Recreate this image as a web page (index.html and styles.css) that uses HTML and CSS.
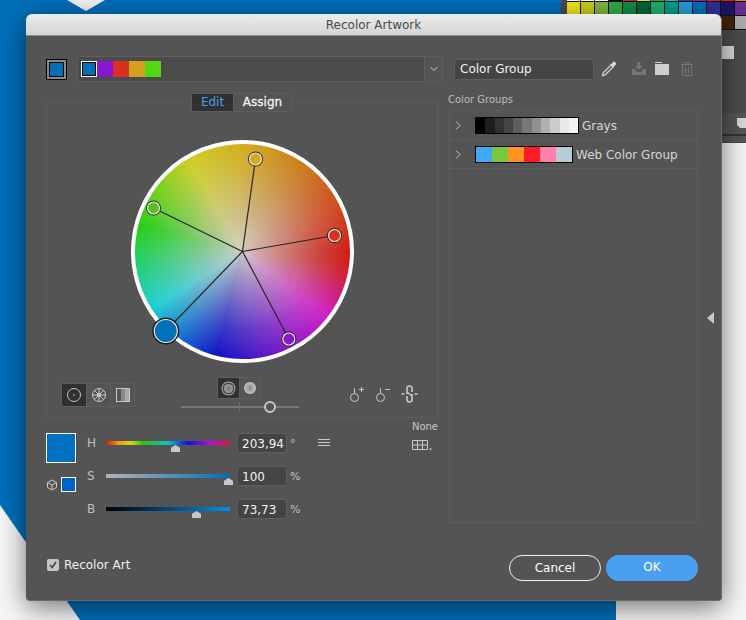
FILE: index.html
```html
<!DOCTYPE html>
<html lang="en">
<head>
    <meta charset="UTF-8">
    <title>Recolor Artwork</title>
    <link rel="stylesheet" href="styles.css">
</head>
<body>
    <!-- artboard behind the dialog -->
    <svg class="backdrop" width="746" height="620" viewBox="0 0 746 620">
        <rect width="746" height="620" fill="#f6f6f6"/>
        <polygon points="0,0 616,0 616,620 80,620 0,505" fill="#0070ba"/>
        <polygon points="67,0 105,0 86,11" fill="#f4f4f4"/>
        <rect x="561" width="185" height="143" fill="#4c4c4c"/>
        <rect x="722" y="113" width="24" height="29" fill="#555"/>
        <rect x="722" y="134" width="24" height="2" fill="#333"/>
        <rect x="722" y="46" width="12" height="13" fill="#dcdcdc"/>
        <path d="M737 118h9v10h-6l-3-3z" fill="#d8d8d8"/>
        <rect x="567" width="180" height="30" fill="#111"/>
        <g>
            <rect x="567" width="13" height="1" fill="#fff"/><rect x="581" width="13" height="1" fill="#fff"/>
            <rect x="595" width="13" height="1" fill="#fff"/><rect x="609" width="13" height="1" fill="#111"/>
            <rect x="623" width="13" height="1" fill="#ed1c24"/><rect x="637" width="13" height="1" fill="#f5e61c"/>
            <rect x="651" width="13" height="1" fill="#22b14c"/><rect x="665" width="13" height="1" fill="#1cc0c0"/>
            <rect x="679" width="13" height="1" fill="#2040d0"/><rect x="693" width="13" height="1" fill="#c010c0"/>
            <rect x="707" width="13" height="1" fill="#ed1c24"/><rect x="721" width="13" height="1" fill="#ed1c24"/>
            <rect x="735" width="11" height="1" fill="#f08020"/>
        </g>
        <g>
            <rect x="567" y="2" width="13" height="13" fill="#f5e61c"/><rect x="581" y="2" width="13" height="13" fill="#d0d018"/>
            <rect x="595" y="2" width="13" height="13" fill="#80b840"/><rect x="609" y="2" width="13" height="13" fill="#34aa48"/>
            <rect x="623" y="2" width="13" height="13" fill="#109048"/><rect x="637" y="2" width="13" height="13" fill="#006838"/>
            <rect x="651" y="2" width="13" height="13" fill="#20b070"/><rect x="665" y="2" width="13" height="13" fill="#00a090"/>
            <rect x="679" y="2" width="13" height="13" fill="#28a0d8"/><rect x="693" y="2" width="13" height="13" fill="#0070b8"/>
            <rect x="707" y="2" width="13" height="13" fill="#2e3192"/><rect x="721" y="2" width="13" height="13" fill="#1b1464"/>
            <rect x="735" y="2" width="11" height="13" fill="#662d91"/>
        </g>
        <rect x="722" y="16" width="12" height="13" fill="#42210b"/>
        <rect x="735" y="16" width="11" height="13" fill="#aaa"/>
    </svg>

    <div class="dialog">
        <div class="titlebar">Recolor Artwork</div>

        <div class="dialog-body">
            <div class="top-row">
                <div class="active-swatch"><span></span></div>
                <div class="harmony-strip">
                    <div class="strip-first"></div>
                    <div class="strip-rest"></div>
                    <div class="strip-arrow">
                        <svg width="10" height="6" viewBox="0 0 10 6"><path d="M1.500 1 5 4.500 8.500 1" class="ln"/></svg>
                    </div>
                </div>
                <div class="name-field">Color Group</div>
                <svg class="ico-dropper" width="18" height="18" viewBox="0 0 18 18">
                    <path d="M10.500 5.500 3.200 12.800 2.500 15.500l2.700-.7L12.500 7.500" fill="none" stroke="#d0d0d0" stroke-width="1.300"/>
                    <path d="M9.500 4.500l1.800-.3L13 2c1.300-1.300 4 1.200 2.800 2.700l-2 1.900-.3 1.900z" fill="#d8d8d8"/>
                </svg>
                <svg class="ico-import" width="16" height="16" viewBox="0 0 16 16">
                    <path d="M6.500 1h3v4H12L8 9 4 5h2.500z" fill="#757575"/>
                    <path d="M1 8h3l2 3h4l2-3h3v6H1z" fill="#757575"/>
                </svg>
                <svg class="ico-folder" width="16" height="16" viewBox="0 0 16 16">
                    <path d="M1 1h7v1H1z" fill="#cfcfcf"/>
                    <path d="M1 3h14v11H1z" fill="#cfcfcf"/>
                </svg>
                <svg class="ico-trash" width="14" height="16" viewBox="0 0 14 16">
                    <path d="M1 3.500h12M5 3.500v-2h4v2M2.500 3.500v11h9v-11M5.500 6v6.500M8.500 6v6.500" class="ln dim"/>
                </svg>
            </div>

            <div class="main">
                <div class="left-col">
                    <div class="panel">
                        <div class="tabs">
                            <div class="tab tab-active">Edit</div>
                            <div class="tab tab-assign">Assign</div>
                        </div>

                        <div class="wheel">
                            <svg class="wheel-marks" width="223" height="223" viewBox="0 0 223 223">
                                <g stroke="#262626" stroke-width="1.200">
                                    <line x1="111.500" y1="111.500" x2="124.500" y2="19"/>
                                    <line x1="111.500" y1="111.500" x2="22.500" y2="68"/>
                                    <line x1="111.500" y1="111.500" x2="203.500" y2="95.500"/>
                                    <line x1="111.500" y1="111.500" x2="157.800" y2="199"/>
                                    <line x1="111.500" y1="111.500" x2="34.800" y2="191"/>
                                </g>
                                <g fill="#262626">
                                    <circle cx="124.500" cy="19" r="7.500"/>
                                    <circle cx="22.500" cy="68" r="7.500"/>
                                    <circle cx="203.500" cy="95.500" r="7.500"/>
                                    <circle cx="157.800" cy="199" r="7.500"/>
                                </g>
                                <g stroke="#e8e8e8" stroke-width="1.200">
                                    <circle cx="124.500" cy="19" r="6" fill="#d8a81c"/>
                                    <circle cx="22.500" cy="68" r="6" fill="#58c020"/>
                                    <circle cx="203.500" cy="95.500" r="6" fill="#d83020"/>
                                    <circle cx="157.800" cy="199" r="6" fill="#8818c8"/>
                                </g>
                                <circle cx="34.800" cy="191" r="13.500" fill="#1c1c1c"/>
                                <circle cx="34.800" cy="191" r="11.500" fill="#0070b8" stroke="#e8e8e8" stroke-width="1.200"/>
                            </svg>
                        </div>

                        <div class="tool-row">
                            <div class="btn-group">
                                <div class="tool-btn tool-btn-active">
                                    <svg width="16" height="16" viewBox="0 0 16 16"><circle cx="8" cy="8" r="6.500" class="ln"/><circle cx="8" cy="8" r=".8" fill="#ccc"/></svg>
                                </div>
                                <div class="tool-btn">
                                    <svg width="16" height="16" viewBox="0 0 16 16">
                                        <circle cx="8" cy="8" r="6.500" class="ln"/>
                                        <circle cx="8" cy="8" r="2" fill="#ccc"/>
                                        <path d="M8 1.500v13M1.500 8h13M3.400 3.400l9.200 9.200M12.600 3.400l-9.200 9.200" class="ln"/>
                                    </svg>
                                </div>
                                <div class="tool-btn">
                                    <svg width="16" height="16" viewBox="0 0 16 16">
                                        <rect x="6" y="2" width="4" height="12" fill="#888"/>
                                        <rect x="10" y="2" width="4" height="12" fill="#a8a8a8"/>
                                        <rect x="1.500" y="1.500" width="13" height="13" class="ln"/>
                                    </svg>
                                </div>
                            </div>

                            <div class="shade-tool">
                                <div class="btn-group shade-group">
                                    <div class="tool-btn tool-btn-active">
                                        <div class="shade-dot shade-ring"></div>
                                    </div>
                                    <div class="tool-btn">
                                        <div class="shade-dot shade-soft"></div>
                                    </div>
                                </div>
                                <div class="shade-slider"><span class="shade-tick"></span><span class="shade-knob"></span></div>
                            </div>

                            <div class="link-tools">
                                <svg width="16" height="18" viewBox="0 0 16 18">
                                    <circle cx="5.500" cy="12.500" r="4" class="ln"/><path d="M5.500 8.500V3M10 4.500h5M12.500 2v5" class="ln"/>
                                </svg>
                                <svg width="16" height="18" viewBox="0 0 16 18">
                                    <circle cx="5.500" cy="12.500" r="4" class="ln"/><path d="M5.500 8.500V3M10 4.500h5" class="ln"/>
                                </svg>
                                <svg width="17" height="18" viewBox="0 0 17 18">
                                    <path d="M6 9V3.500a2.500 2.500 0 0 1 5 0V7M11 9v5.500a2.500 2.500 0 0 1-5 0V11M6 7l5 4M.5 9h3M13.500 9h3" class="ln ln-chain"/>
                                </svg>
                            </div>
                        </div>
                    </div>

                    <div class="hsb">
                        <div class="hsb-swatches">
                            <div class="fill-swatch"></div>
                            <div class="web-safe">
                                <svg width="12" height="12" viewBox="0 0 12 12"><path d="M6 1l4.500 2.500v5L6 11 1.500 8.500v-5zM1.500 3.500 6 6l4.500-2.500M6 6v5" class="ln"/></svg>
                                <div class="mini-swatch"></div>
                            </div>
                        </div>
                        <div class="hsb-rows">
                            <div class="hsb-row">
                                <div class="hsb-label">H</div>
                                <div class="track track-h"><span class="thumb thumb-h"></span></div>
                                <div class="num-field">203,94</div>
                                <div class="unit">°</div>
                                <svg class="ico-menu" width="12" height="8" viewBox="0 0 12 8"><path d="M0 .5h12M0 3.500h12M0 6.500h12" class="ln"/></svg>
                            </div>
                            <div class="hsb-row">
                                <div class="hsb-label">S</div>
                                <div class="track track-s"><span class="thumb thumb-s"></span></div>
                                <div class="num-field">100</div>
                                <div class="unit">%</div>
                            </div>
                            <div class="hsb-row">
                                <div class="hsb-label">B</div>
                                <div class="track track-b"><span class="thumb thumb-b"></span></div>
                                <div class="num-field">73,73</div>
                                <div class="unit">%</div>
                            </div>
                        </div>
                        <div class="none-box">
                            <div class="none-label">None</div>
                            <svg width="20" height="11" viewBox="0 0 20 11">
                                <path d="M.5.500h15v9H.5zM.5 5h15M5.500.500v9M10.500.500v9" class="ln"/>
                                <path d="M17 8.500h3L18.500 10.500z" fill="#ccc"/>
                            </svg>
                        </div>
                    </div>
                </div>

                <div class="right-col">
                    <div class="groups-label">Color Groups</div>
                    <div class="groups-box">
                        <div class="group-row">
                            <svg class="chev" width="6" height="9" viewBox="0 0 6 9"><path d="M1 .5 5 4.500 1 8.500" class="ln"/></svg>
                            <div class="group-swatch group-grays"></div>
                            <div class="group-name">Grays</div>
                        </div>
                        <div class="group-row">
                            <svg class="chev" width="6" height="9" viewBox="0 0 6 9"><path d="M1 .5 5 4.500 1 8.500" class="ln"/></svg>
                            <div class="group-swatch group-web"></div>
                            <div class="group-name">Web Color Group</div>
                        </div>
                    </div>
                </div>
            </div>

            <div class="footer">
                <div class="check-wrap">
                    <div class="checkbox">
                        <svg width="12" height="12" viewBox="0 0 12 12"><path d="M3 6l2.200 2.500L9 3" fill="none" stroke="#444" stroke-width="1.600"/></svg>
                    </div>
                    <div class="check-label">Recolor Art</div>
                </div>
                <div class="footer-btns">
                    <div class="btn btn-cancel">Cancel</div>
                    <div class="btn btn-ok">OK</div>
                </div>
            </div>
        </div>

        <div class="collapse-arrow"></div>
    </div>
</body>
</html>
```

FILE: styles.css
```css
* {
    box-sizing: border-box;
}

body {
    margin: 0;
    width: 746px;
    height: 620px;
    overflow: hidden;
    position: relative;
    font-family: "DejaVu Sans", Verdana, sans-serif;
    font-size: 12px;
    color: #e6e6e6;
}

.backdrop {
    position: absolute;
    top: 0;
    left: 0;
}

.ln {
    fill: none;
    stroke: #c8c8c8;
    stroke-width: 1;
}

.ln-chain {
    stroke-width: 1.600;
}

.dim {
    stroke: #757575;
}

.dialog {
    position: absolute;
    left: 26px;
    top: 14px;
    width: 696px;
    height: 587px;
    background-color: #545454;
    border-radius: 6px 6px 4px 4px;
    border-right: 1px solid #6a6a6a;
    border-bottom: 1px solid #6a6a6a;
    box-shadow: 0 6px 28px rgba(0,0,0,0.55);
}

.titlebar {
    height: 22px;
    line-height: 23px;
    text-align: center;
    color: #4a4a4a;
    background: linear-gradient(#ececec, #d4d4d4);
    border-bottom: 1px solid #8c8c8c;
    border-radius: 6px 6px 0 0;
}

.dialog-body {
    padding: 20px 23px 0 20px;
}

/* top row */
.top-row {
    display: flex;
    align-items: center;
    height: 26px;
}

.active-swatch {
    width: 21px;
    height: 21px;
    border: 1px solid #000;
    background-color: #8a8a8a;
    padding: 2px;
}

.active-swatch span {
    display: block;
    width: 100%;
    height: 100%;
    background-color: #0070b8;
    border: 1px solid #000;
}

.harmony-strip {
    width: 366px;
    height: 26px;
    margin-left: 10px;
    display: flex;
    align-items: center;
    padding-left: 3px;
    background-color: #4b4b4b;
    border: 1px solid #5e5e5e;
    border-radius: 2px;
}

.strip-first {
    width: 16px;
    height: 16px;
    background-color: #0070b8;
    border: 1px solid #fff;
    box-shadow: inset 0 0 0 1px #000;
}

.strip-rest {
    width: 64px;
    height: 16px;
    background: linear-gradient(90deg, #8518d0 25%, #d83020 25%, #d83020 50%, #d4a020 50%, #d4a020 75%, #50d810 75%);
}

.strip-arrow {
    margin-left: auto;
    width: 18px;
    height: 24px;
    display: flex;
    align-items: center;
    justify-content: center;
    background-color: #545454;
    border-left: 1px solid #5e5e5e;
}

.name-field {
    width: 140px;
    height: 21px;
    line-height: 19px;
    margin-left: 11px;
    padding-left: 5px;
    background-color: #444;
    border: 1px solid #5e5e5e;
    border-radius: 3px;
    color: #f0f0f0;
}

.ico-dropper {
    margin-left: 6px;
}

.ico-import {
    margin-left: 13px;
}

.ico-folder {
    margin-left: 7px;
}

.ico-trash {
    margin-left: 10px;
}

.main {
    display: flex;
    gap: 11px;
    margin-top: 11px;
}

.left-col {
    width: 392px;
    padding-top: 9px;
}

/* wheel panel */
.panel {
    position: relative;
    height: 316px;
    padding-top: 37px;
    border: 1px solid #5e5e5e;
    border-radius: 3px;
}

.tabs {
    position: absolute;
    top: -10px;
    left: 144px;
    display: flex;
    height: 19px;
    background-color: #545454;
    border: 1px solid #5e5e5e;
    border-radius: 3px;
    box-shadow: 0 0 0 3px #545454;
}

.tab {
    width: 58px;
    line-height: 17px;
    text-align: center;
    color: #f0f0f0;
    border-left: 1px solid #5e5e5e;
}

.tab-assign {
    -webkit-text-stroke: 0.3px #f0f0f0;
}

.tab-active {
    width: 41px;
    color: #4a9fe8;
    background-color: #303030;
    border-left: none;
}

.wheel {
    position: relative;
    width: 223px;
    height: 223px;
    margin: 0 auto;
    border-radius: 50%;
    border: 4px solid #fff;
    background-origin: border-box;
    background-image:
        radial-gradient(circle closest-side, rgba(212,208,202,0.94) 0, rgba(204,198,198,0.6) 35%, rgba(200,200,200,0.24) 70%, rgba(200,200,200,0) 100%),
        conic-gradient(from 90deg, #d01810 0deg, #d01810 6deg, #d018c8 38deg, #0a0cc8 104deg, #18d0d8 148deg, #20d010 194deg, #d0d020 240deg, #d4ac18 270deg, #cc7a18 305deg, #d04018 338deg, #d01810 360deg);
}

.wheel-marks {
    position: absolute;
    top: -4px;
    left: -4px;
    overflow: visible;
}

.tool-row {
    display: flex;
    margin-top: 14px;
    padding: 0 19px 0 14px;
}

.btn-group {
    display: flex;
    height: 24px;
    margin-top: 6px;
    border: 1px solid #5e5e5e;
    border-radius: 3px;
}

.tool-btn {
    width: 24px;
    display: flex;
    align-items: center;
    justify-content: center;
    border-left: 1px solid #5e5e5e;
}

.tool-btn:first-child {
    border-left: none;
}

.tool-btn-active {
    background-color: #303030;
}

.shade-tool {
    width: 118px;
    margin-left: 46px;
    display: flex;
    flex-direction: column;
    align-items: center;
}

.shade-group {
    margin-top: 0;
    height: 22px;
    margin-right: 2px;
}

.shade-group .tool-btn {
    width: 21px;
}

.shade-dot {
    width: 12px;
    height: 12px;
    border-radius: 50%;
    background: radial-gradient(circle, #777 0, #999 60%, #bbb 100%);
}

.shade-soft {
    background: radial-gradient(circle, #888 0, #bbb 60%, #ddd 100%);
}

.shade-ring {
    width: 9px;
    height: 9px;
    box-shadow: 0 0 0 1.500px #444, 0 0 0 2.500px #aaa;
}

.shade-slider {
    position: relative;
    width: 118px;
    height: 2px;
    margin-top: 7px;
    background-color: #777;
}

.shade-tick {
    position: absolute;
    left: 58px;
    top: -4px;
    width: 1px;
    height: 10px;
    background-color: #6e6e6e;
}

.shade-knob {
    position: absolute;
    left: 83px;
    top: -5px;
    width: 12px;
    height: 12px;
    border: 2px solid #c8c8c8;
    border-radius: 50%;
    background-color: #545454;
}

.link-tools {
    margin-left: auto;
    display: flex;
    gap: 10px;
    height: 18px;
    margin-top: 8px;
}

/* hue, saturation, brightness */
.hsb {
    display: flex;
    margin-top: 15px;
}

.hsb-swatches {
    width: 30px;
}

.fill-swatch {
    width: 30px;
    height: 30px;
    background-color: #0070c0;
    border: 1px solid #fff;
}

.web-safe {
    display: flex;
    align-items: center;
    justify-content: space-between;
    margin-top: 14px;
}

.mini-swatch {
    width: 15px;
    height: 15px;
    background-color: #0062c8;
    border: 1px solid #fff;
}

.hsb-rows {
    margin-left: 11px;
}

.hsb-row {
    display: flex;
    align-items: center;
    height: 20px;
    margin-bottom: 13px;
}

.hsb-row:last-child {
    margin-bottom: 0;
}

.hsb-label {
    width: 19px;
    color: #c0c0c0;
}

.track {
    position: relative;
    width: 124px;
    height: 4px;
}

.track-h {
    background: linear-gradient(90deg, #e01010, #e8a010, #d8d810, #30c010 30%, #10c0c0 50%, #1010e0 66%, #c010d0 85%, #e01040);
}

.track-s {
    background: linear-gradient(90deg, #b4b4b4, #0070b8);
}

.track-b {
    background: linear-gradient(90deg, #000, #0090f0);
}

.thumb {
    position: absolute;
    top: 4px;
    width: 9px;
    height: 7px;
    background-color: #c8c8c8;
    clip-path: polygon(50% 0, 100% 40%, 100% 100%, 0 100%, 0 40%);
}

.thumb-h {
    left: 65px;
}

.thumb-s {
    left: 118px;
}

.thumb-b {
    left: 86px;
}

.num-field {
    width: 50px;
    height: 20px;
    line-height: 20px;
    margin-left: 7px;
    padding-left: 4px;
    background-color: #444;
    border: 1px solid #5e5e5e;
    border-radius: 3px;
    color: #f2f2f2;
}

.unit {
    margin-left: 3px;
    font-size: 11px;
    color: #c0c0c0;
}

.ico-menu {
    margin-left: 22px;
}

.none-box {
    margin-left: auto;
    margin-top: -12px;
    display: flex;
    flex-direction: column;
    gap: 8px;
}

.none-label {
    font-size: 10px;
    color: #c8c8c8;
}

/* color groups */
.right-col {
    width: 249px;
}

.groups-label {
    height: 17px;
    font-size: 10px;
    color: #bcbcbc;
    margin-left: -1px;
    padding-top: 1px;
}

.groups-box {
    height: 413px;
    border: 1px solid #5e5e5e;
    border-radius: 2px;
}

.group-row {
    display: flex;
    align-items: center;
    height: 29px;
    padding-left: 5px;
    border-bottom: 1px solid #5e5e5e;
}

.group-swatch {
    height: 17px;
    margin-left: 14px;
    border: 1px solid #000;
}

.group-grays {
    width: 104px;
    background: linear-gradient(90deg, #000 9.100%, #1e1e1e 9.100%, #1e1e1e 18.200%, #333 18.200%, #333 27.300%, #444 27.300%, #444 36.400%, #5e5e5e 36.400%, #5e5e5e 45.500%, #777 45.500%, #777 54.600%, #909090 54.600%, #909090 63.700%, #b0b0b0 63.700%, #b0b0b0 72.800%, #ccc 72.800%, #ccc 81.900%, #e8e8e8 81.900%, #e8e8e8 91%, #f4f4f4 91%);
}

.group-web {
    width: 98px;
    background: linear-gradient(90deg, #42a8f8 16.660%, #78c840 16.660%, #78c840 33.330%, #ff9420 33.330%, #ff9420 50%, #ff1c24 50%, #ff1c24 66.660%, #ff80ac 66.660%, #ff80ac 83.330%, #b4ccd8 83.330%);
}

.group-name {
    margin-left: 3px;
    padding-top: 2px;
    color: #d4d4d4;
}

/* footer */
.footer {
    display: flex;
    justify-content: space-between;
    margin-top: 32px;
}

.check-wrap {
    display: flex;
    align-items: center;
    height: 12px;
    margin-top: 4px;
    padding-left: 1px;
}

.checkbox {
    width: 12px;
    height: 12px;
    background-color: #c4c4c4;
    border-radius: 2px;
}

.check-label {
    margin-left: 5px;
    color: #f0f0f0;
}

.footer-btns {
    display: flex;
    gap: 5px;
}

.btn {
    width: 92px;
    height: 26px;
    line-height: 24px;
    text-align: center;
    color: #fff;
    border-radius: 13px;
}

.btn-cancel {
    border: 1px solid #eee;
}

.btn-ok {
    background-color: #4a9ff0;
}

.collapse-arrow {
    position: absolute;
    left: 681px;
    top: 298px;
    width: 7px;
    height: 12px;
    background-color: #c8c8c8;
    clip-path: polygon(100% 0, 100% 100%, 0 50%);
}
```
